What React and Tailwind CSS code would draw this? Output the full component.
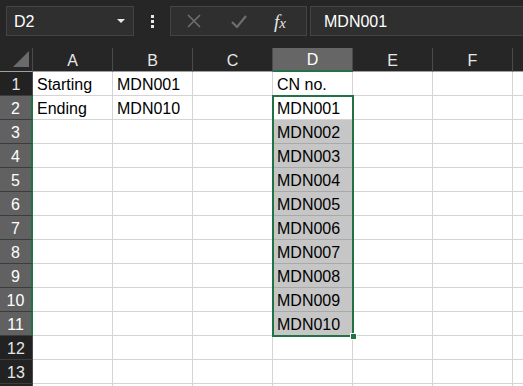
import React from 'react';

const cols = ['A', 'B', 'C', 'D', 'E', 'F', 'G'];

const data = {
  1: { A: 'Starting', B: 'MDN001', D: 'CN no.' },
  2: { A: 'Ending', B: 'MDN010', D: 'MDN001' },
  3: { D: 'MDN002' },
  4: { D: 'MDN003' },
  5: { D: 'MDN004' },
  6: { D: 'MDN005' },
  7: { D: 'MDN006' },
  8: { D: 'MDN007' },
  9: { D: 'MDN008' },
  10: { D: 'MDN009' },
  11: { D: 'MDN010' },
};

const rows = Array.from({ length: 14 }, (_, i) => i + 1);

const App = () => {
  return (
    <div className="w-[523px] h-[386px] overflow-hidden bg-[#262626] font-['Liberation_Sans',Arial,sans-serif]">
      {/* formula bar */}
      <div className="flex items-center h-[48px] pb-[6px] pl-[6px] gap-0">
        <div className="flex items-center justify-between w-[128px] h-[30px] border border-[#444] bg-[#2f2f2f] pl-[7px] pr-[8px]">
          <span className="text-[16px] text-white pt-[2px]">D2</span>
          <svg width="8" height="4" viewBox="0 0 8 4"><path d="M0 0h8L4 4z" fill="#e8e8e8" /></svg>
        </div>
        <div className="flex flex-col gap-[2px] ml-[17px] mr-[16px]">
          <div className="w-[3px] h-[3px] bg-[#e8e8e8]" />
          <div className="w-[3px] h-[3px] bg-[#e8e8e8]" />
          <div className="w-[3px] h-[3px] bg-[#e8e8e8]" />
        </div>
        <div className="flex items-center w-[137px] h-[30px] border border-[#444] bg-[#2f2f2f]">
          <svg className="ml-[16px]" width="14" height="14" viewBox="0 0 14 14">
            <path d="M1 1L13 13M13 1L1 13" stroke="#6e6e6e" strokeWidth="1.6" />
          </svg>
          <svg className="ml-[30px]" width="16" height="13" viewBox="0 0 16 13">
            <path d="M1 7L6 12L15 1" stroke="#6e6e6e" strokeWidth="2.2" fill="none" />
          </svg>
          <span className="ml-[27px] text-[19px] italic text-[#e4e4e4] font-['Liberation_Serif',serif] leading-none">
            f<span className="text-[15px]">x</span>
          </span>
        </div>
        <div className="flex items-center flex-1 h-[30px] ml-[3px] border border-[#444] border-r-0 bg-[#2f2f2f] pl-[13px]">
          <span className="text-[16px] text-white pt-[2px]">MDN001</span>
        </div>
      </div>

      {/* sheet */}
      <div className="relative">
        <div className="grid grid-cols-[33px_repeat(7,80px)]">
          {/* column headers */}
          <div className="h-[24px] flex items-end justify-end border-r border-[#4a4a4a] border-b border-b-[#a0a0a0] pr-[3px] pb-[4px]">
            <svg width="16" height="16" viewBox="0 0 16 16"><path d="M16 0V16H0z" fill="#6a6a6a" /></svg>
          </div>
          {cols.map((c) => (
            <div
              key={c}
              className={`h-[24px] flex items-center justify-center pt-[2px] text-[16px] border-r border-[#4a4a4a] ${
                c === 'D'
                  ? 'bg-[#666] text-white border-b-2 border-b-[#217346]'
                  : 'text-[#e6e6e6] border-b border-b-[#a0a0a0]'
              }`}
            >
              {c}
            </div>
          ))}

          {rows.map((r) => {
            const sel = r >= 2 && r <= 11;
            return (
              <React.Fragment key={r}>
                <div
                  className={`h-[24px] flex items-center justify-center pt-[2px] text-[16px] border-b border-[#3c3c3c] ${
                    sel
                      ? 'bg-[#616161] text-white border-r-2 border-r-[#217346]'
                      : 'bg-[#222] text-[#e6e6e6] border-r border-r-[#4a4a4a]'
                  }`}
                >
                  {r}
                </div>
                {cols.map((c) => {
                  const shaded = c === 'D' && r >= 3 && r <= 11;
                  return (
                    <div
                      key={c}
                      className={`h-[24px] flex items-center pl-[4px] pt-[3px] text-[16px] text-black whitespace-nowrap border-r border-b ${
                        shaded ? 'bg-[#c6c6c6] border-[#a9a9a9]' : 'bg-white border-[#d4d4d4]'
                      }`}
                    >
                      {data[r]?.[c] || ''}
                    </div>
                  );
                })}
              </React.Fragment>
            );
          })}
        </div>

        {/* selection outline D2:D11 */}
        <div className="absolute left-[272px] top-[47px] w-[82px] h-[242px] border-2 border-[#217346] pointer-events-none" />
        <div className="absolute left-[350px] top-[285px] w-[7px] h-[7px] bg-[#217346] border border-white" />
      </div>
    </div>
  );
};

export default App;
